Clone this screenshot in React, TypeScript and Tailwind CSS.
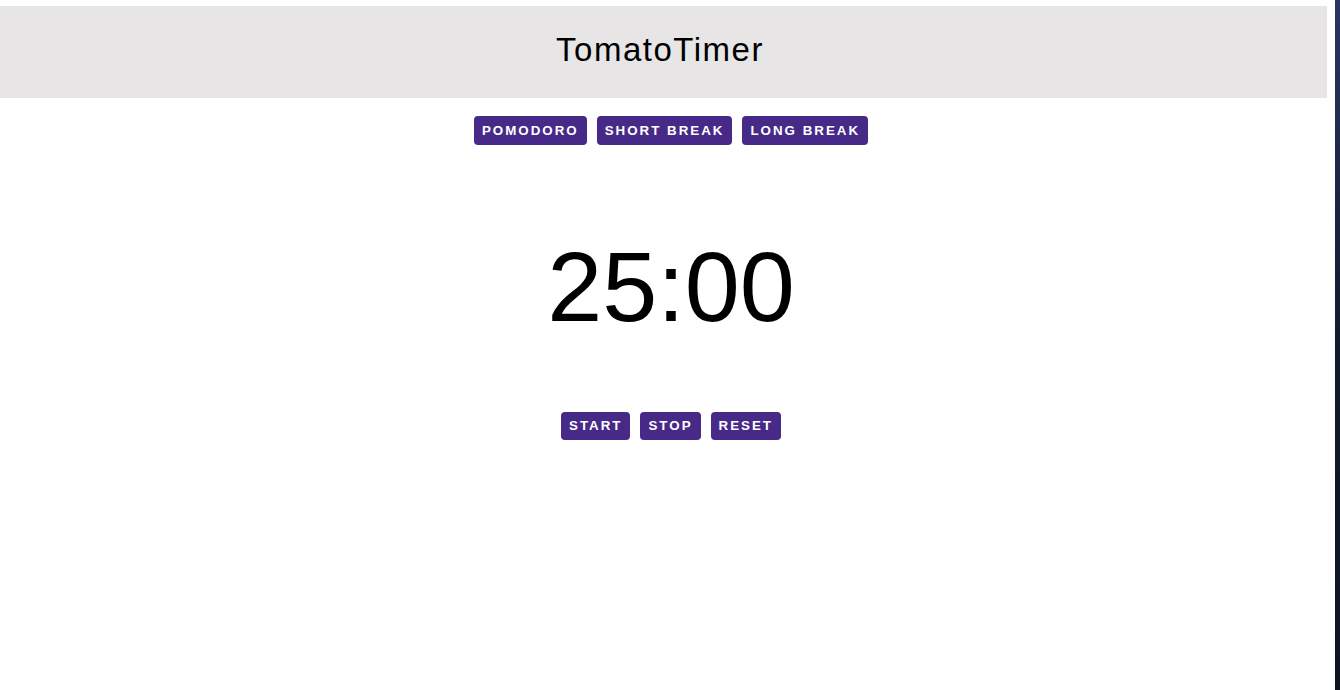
const tabs = ['POMODORO', 'SHORT BREAK', 'LONG BREAK'];
const controls = ['START', 'STOP', 'RESET'];

const PillButton = ({ label, height }: { label: string; height: string }) => (
  <button
    type="button"
    className={`${height} flex items-center rounded-[4px] bg-[#472a88] px-2 text-[13.33px] font-bold tracking-[2px] text-white`}
  >
    {label}
  </button>
);

export default function App() {
  return (
    <div
      className="flex h-[690px] w-full overflow-hidden"
      style={{ fontFamily: '"Liberation Sans", Arial, sans-serif' }}
    >
      <div className="flex w-[1335px] flex-col bg-white pt-[6px]">
        <header className="flex h-[92px] w-[1327px] items-center justify-center bg-[#e7e5e6] pb-[4px] pr-[7px]">
          <h1 className="text-[33px] tracking-[1.5px] text-black">TomatoTimer</h1>
        </header>

        <main className="flex w-[1327px] flex-col items-center pl-[15px]">
          <div className="mt-[18px] flex gap-[10px]">
            {tabs.map((t) => (
              <PillButton key={t} label={t} height="h-[29px]" />
            ))}
          </div>

          <div className="mt-[92px] h-[99px] text-[99px] leading-none text-black">25:00</div>

          <div className="mt-[76px] flex gap-[10px]">
            {controls.map((c) => (
              <PillButton key={c} label={c} height="h-[28px]" />
            ))}
          </div>
        </main>
      </div>
      <div className="flex-1 bg-gradient-to-b from-[#27375f] via-[#101a2e] to-[#0c1424]" />
    </div>
  );
}
